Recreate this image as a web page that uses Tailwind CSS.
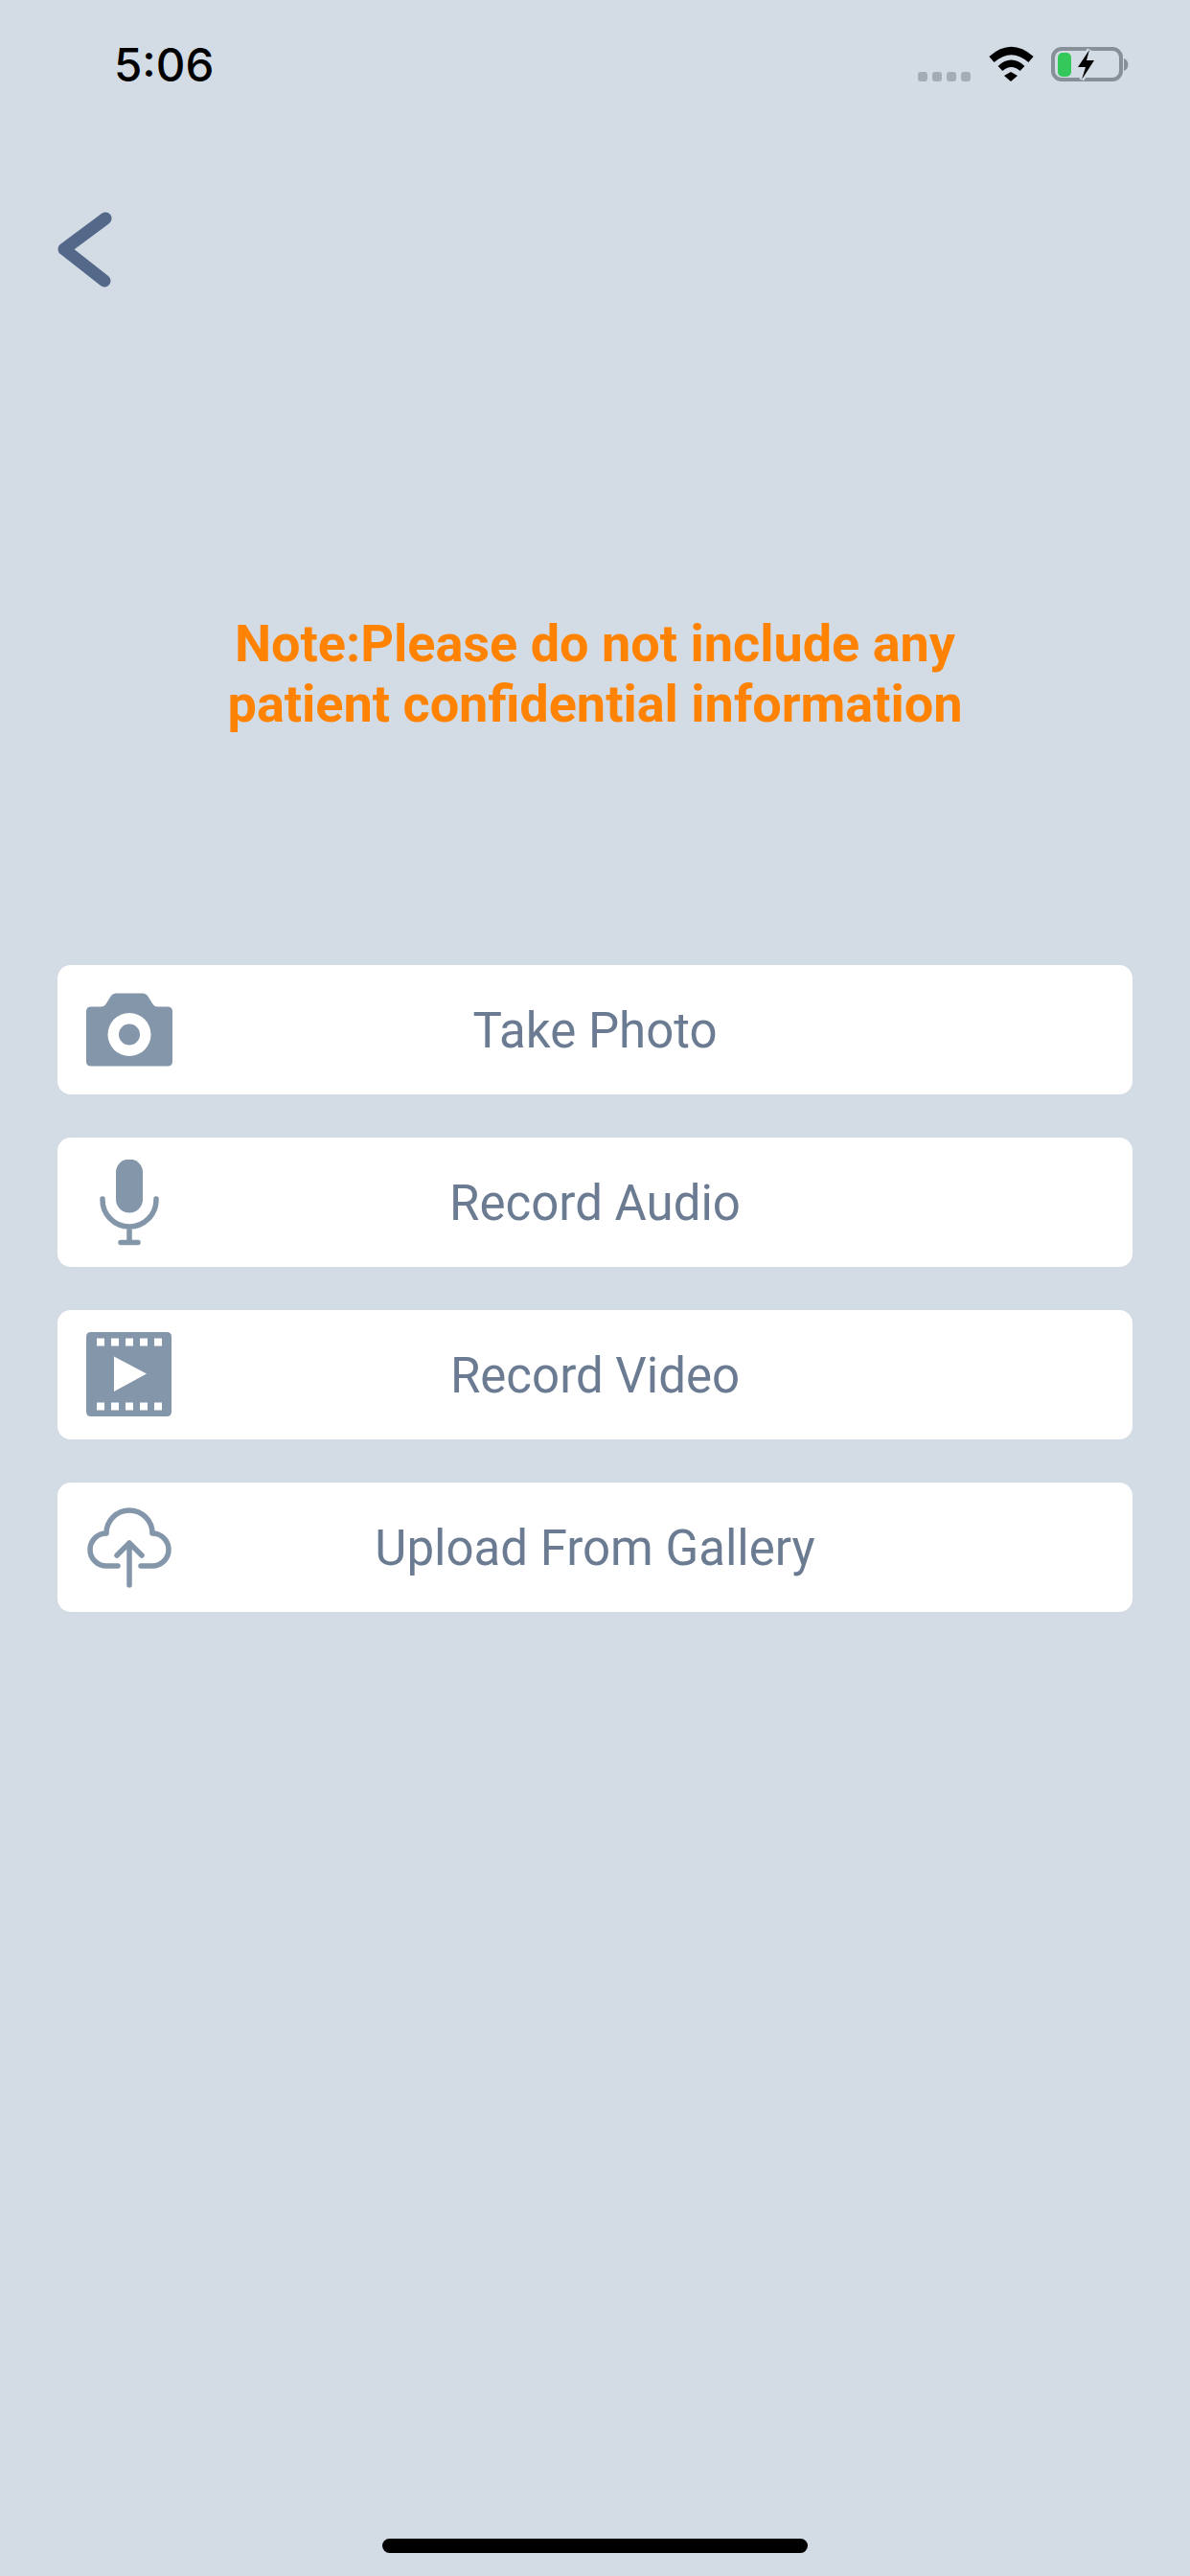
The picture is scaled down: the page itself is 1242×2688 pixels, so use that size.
<!DOCTYPE html>
<html lang="en">
<head>
    <meta charset="UTF-8">
    <meta name="viewport" content="width=device-width, initial-scale=1.0">
    <title>Add Media</title>
    <script src="https://cdn.jsdelivr.net/npm/@tailwindcss/browser@4"></script>
</head>
<body class="bg-[#d3dbe5]">
<div class="relative w-[1242px] h-[2688px] overflow-hidden font-['Roboto',sans-serif]">

    <!-- Status bar -->
    <div class="flex justify-between items-start h-[132px] pl-[119px] pr-[64px] pt-[48px]">
        <span class="font-['Inter',sans-serif] font-medium text-[47.500px] leading-[40px] text-black">5:06</span>
        <svg class="-mt-[1px] w-[220px] h-[40px]" viewBox="0 0 220 40">
            <rect x="0" y="28" width="10" height="10" rx="3" fill="#a3adb8"/>
            <rect x="15" y="28" width="10" height="10" rx="3" fill="#a3adb8"/>
            <rect x="30" y="28" width="10" height="10" rx="3" fill="#a3adb8"/>
            <rect x="45" y="28" width="10" height="10" rx="3" fill="#a3adb8"/>
            <path d="M77 15Q97.500 -3 118 15" fill="none" stroke="#000" stroke-width="8"/>
            <path d="M86 24.500Q97.500 14 109 24.500" fill="none" stroke="#000" stroke-width="7"/>
            <polygon points="90,32 97,28 104,32 97,38"/>
            <rect x="141" y="4" width="71" height="32" rx="9" fill="none" stroke="#878f98" stroke-width="4"/>
            <rect x="146" y="8" width="14" height="25" rx="5" fill="#34c759"/>
            <polygon points="179,5 167,23 175,23 171,36 184,16 176,16" stroke="#d3dbe5" stroke-width="5" fill="#d3dbe5"/>
            <polygon points="179,5 167,23 175,23 171,36 184,16 176,16" fill="#000"/>
            <path d="M215 14a7 7 0 0 1 0 13z" fill="#878f98"/>
        </svg>
    </div>

    <!-- Back -->
    <div class="pl-[55px] pt-[88px]">
        <svg class="w-[70px] h-[80px]" viewBox="0 0 70 80">
            <path d="M55 8L12 40L54 73" fill="none" stroke="#54698a" stroke-width="13" stroke-linecap="round" stroke-linejoin="round"/>
        </svg>
    </div>

    <!-- Note -->
    <p class="mt-[340px] text-center font-bold text-[54px] leading-[63px] text-[#ff8200]">
        Note:Please do not include any<br>patient confidential information
    </p>

    <!-- Options -->
    <div class="mt-[241px] mx-[60px] flex flex-col gap-[45px]">
        <button class="grid grid-cols-[1fr_auto_1fr] items-center h-[135px] bg-white rounded-[14px] pl-[30px] text-[51px] text-[#6b7b92]">
            <svg class="w-[90px] h-[90px]" viewBox="0 0 90 90">
                <path fill-rule="evenodd" fill="#8496a9" d="M5 20.500H15Q19 20.500 21 17L26 9Q27.500 6.500 31 6.500H59Q62.500 6.500 64 9L69 17Q71 20.500 75 20.500H85Q90 20.500 90 25.500V77.500Q90 82.500 85 82.500H5Q0 82.500 0 77.500V25.500Q0 20.500 5 20.500ZM45 27A22.500 22.500 0 1 0 45 72A22.500 22.500 0 1 0 45 27ZM45 38.500A11 11 0 1 1 45 60.500A11 11 0 1 1 45 38.500Z"/>
            </svg>
            <span class="-ml-[30px] pt-[3px]">Take Photo</span>
            <span></span>
        </button>
        <button class="grid grid-cols-[1fr_auto_1fr] items-center h-[135px] bg-white rounded-[14px] pl-[30px] text-[51px] text-[#6b7b92]">
            <svg class="w-[90px] h-[90px]" viewBox="0 0 90 90">
                <rect x="31" y="-0.500" width="28" height="56" rx="14" fill="#8496a9"/>
                <path d="M17 41V42A28 28 0 0 0 73 42V41M45 70V86M36 86.500H54" fill="none" stroke="#8496a9" stroke-width="5.500" stroke-linecap="round"/>
            </svg>
            <span class="-ml-[30px] pt-[3px]">Record Audio</span>
            <span></span>
        </button>
        <button class="grid grid-cols-[1fr_auto_1fr] items-center h-[135px] bg-white rounded-[14px] pl-[30px] text-[51px] text-[#6b7b92]">
            <svg class="w-[90px] h-[90px]" viewBox="0 0 90 90">
                <path fill-rule="evenodd" fill="#8496a9" d="M5 0H84Q89 0 89 5V83Q89 88 84 88H5Q0 88 0 83V5Q0 0 5 0ZM11 6.500V14.500H19V6.500ZM26 6.500V14.500H34V6.500ZM41 6.500V14.500H49V6.500ZM56 6.500V14.500H64V6.500ZM71 6.500V14.500H79V6.500ZM11 73.500V81.500H19V73.500ZM26 73.500V81.500H34V73.500ZM41 73.500V81.500H49V73.500ZM56 73.500V81.500H64V73.500ZM71 73.500V81.500H79V73.500ZM29 25.500V62L63 43.500Z"/>
            </svg>
            <span class="-ml-[30px] pt-[3px]">Record Video</span>
            <span></span>
        </button>
        <button class="grid grid-cols-[1fr_auto_1fr] items-center h-[135px] bg-white rounded-[14px] pl-[30px] text-[51px] text-[#6b7b92]">
            <svg class="w-[90px] h-[90px]" viewBox="0 0 90 90">
                <path d="M33 64H21A17 17 0 0 1 21 30A24 24 0 0 1 69 30A17 17 0 0 1 69 64H57M45 84V41M32 53L45 40L58 53" fill="none" stroke="#8496a9" stroke-width="5.500" stroke-linecap="round" stroke-linejoin="round"/>
            </svg>
            <span class="-ml-[30px] pt-[3px]">Upload From Gallery</span>
            <span></span>
        </button>
    </div>

    <!-- Home indicator -->
    <div class="absolute left-[399px] bottom-[24px] w-[444px] h-[15px] rounded-full bg-black"></div>
</div>
</body>
</html>
